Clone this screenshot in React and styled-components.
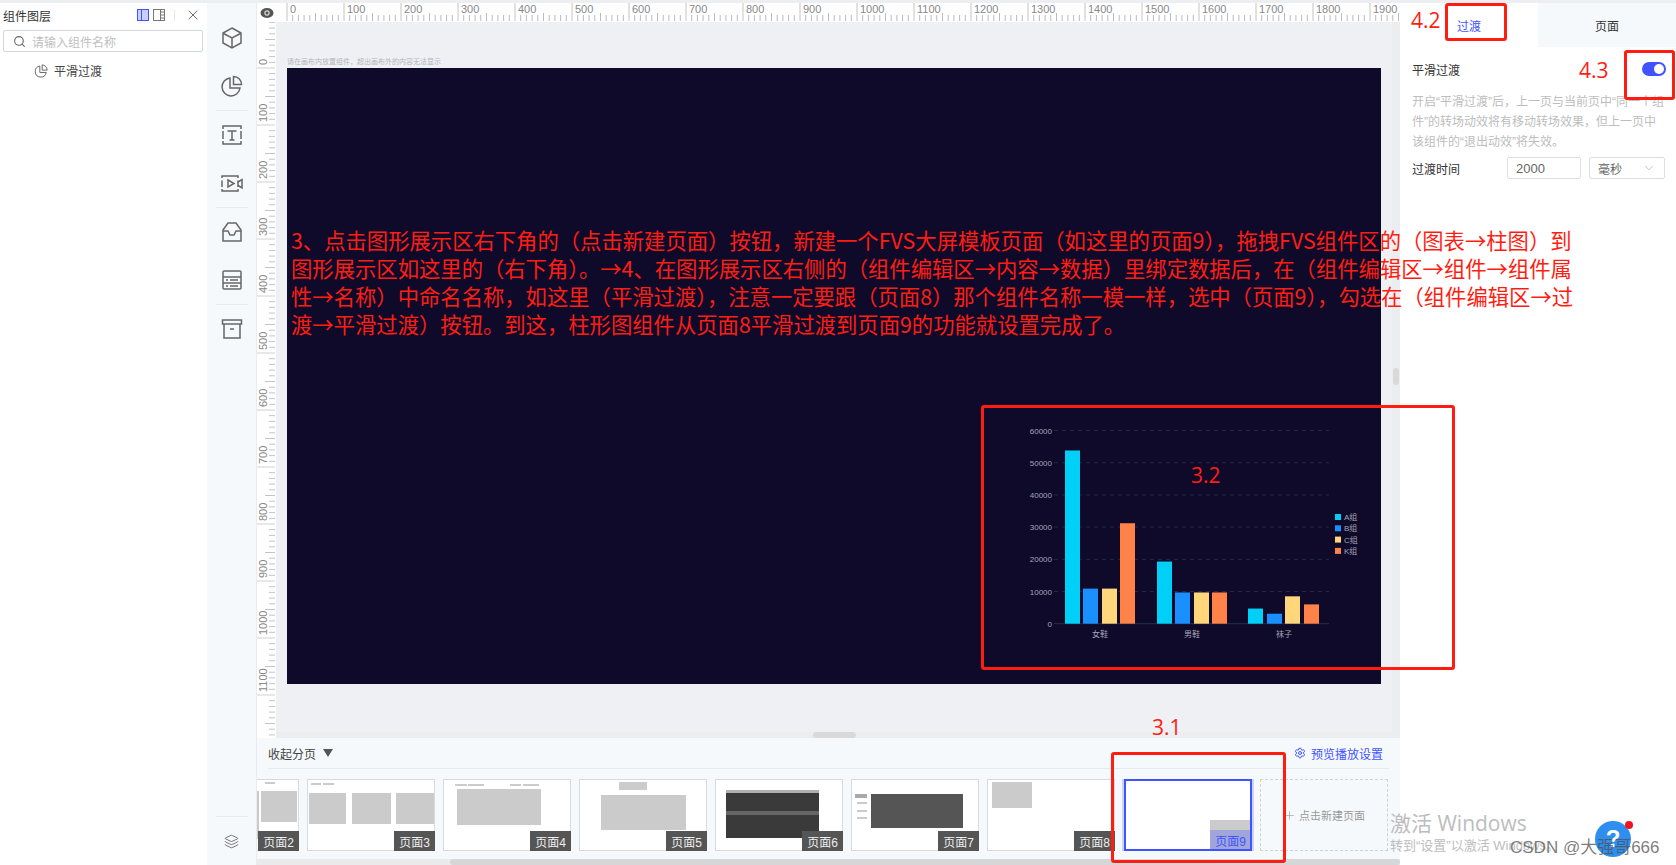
import React from 'react'
import styled, { createGlobalStyle } from 'styled-components'
import { Search, ChevronDown, X, Settings, Layers, Plus } from 'lucide-react'

const GlobalStyle = createGlobalStyle`
  html, body { margin: 0; padding: 0; background: #fff; }
  body { font-family: "Liberation Sans", "Noto Sans CJK SC", sans-serif; font-size: 12px; color: #333; }
  * { box-sizing: border-box; }
`

const MAJOR = 57
const range = (n) => Array.from({ length: n }, (_, i) => i)

const Page = styled.div`
  position: relative;
  height: 865px;
  width: 1676px;
  overflow: hidden;
  border-top: 3px solid #eceef2;
  display: grid;
  grid-template-columns: 207px 50px 1fr 276px;
`

/* left layer panel */
const LayerPanel = styled.aside`
  background: #fff;
  padding: 0 3px;
`
const PanelHead = styled.div`
  height: 27px;
  display: flex;
  align-items: center;
  color: #333;
`
const PanelTitle = styled.span`
  flex: 1;
  margin-top: -3px;
`
const HeadIcons = styled.div`
  display: flex;
  align-items: center;
  gap: 4px;
  margin-right: 3px;
  margin-top: -3px;
`
const HeadSep = styled.i`
  width: 1px;
  height: 11px;
  background: #e6e8ec;
  margin: 0 6px 0 5px;
`
const SearchBox = styled.div`
  height: 22px;
  width: 200px;
  border: 1px solid #d4d7dc;
  border-radius: 2px;
  display: flex;
  align-items: center;
  gap: 6px;
  padding-left: 9px;
  color: #c0c0c0;
  svg { color: #666; }
`
const TreeItem = styled.div`
  display: flex;
  align-items: center;
  gap: 6px;
  margin: 10px 0 0 31px;
  color: #444;
`

/* icon rail */
const Rail = styled.nav`
  background: #f6f9fc;
  display: flex;
  flex-direction: column;
  align-items: center;
  padding-top: 11px;
  border-right: 1px solid #e8ebf0;
`
const RailItem = styled.div`
  height: 48px;
  width: 100%;
  display: flex;
  align-items: center;
  justify-content: center;
  color: #666;
  flex: none;
`
const RailRule = styled.hr`
  width: 32px;
  height: 1px;
  border: 0;
  margin: 0;
  background: #e6e9ee;
  flex: none;
  ${(p) => p.$bottom && 'margin-top: auto;'}
`
const RailFoot = styled.div`
  height: 48px;
  display: flex;
  align-items: center;
  justify-content: center;
  color: #666;
`

/* centre */
const Center = styled.main`
  display: flex;
  flex-direction: column;
  min-width: 0;
  height: 862px;
`
const TopRuler = styled.div`
  height: 19px;
  display: flex;
  flex: none;
`
const Corner = styled.div`
  width: 19px;
  background: #fff;
  display: flex;
  align-items: center;
  justify-content: center;
  flex: none;
`
const Workspace = styled.div`
  flex: 1;
  display: flex;
  min-height: 0;
`
const Stage = styled.div`
  position: relative;
  flex: 1;
  background: #eff0f4;
  padding: 34px 0 0 11px;
`
const Hint = styled.div`
  font-size: 7px;
  line-height: 12px;
  color: #b4b4ba;
`
const Screen = styled.div`
  position: relative;
  width: 1094px;
  height: 616px;
  background: #0f0a2a;
`
const ChartWrap = styled.div`
  position: absolute;
  left: 733px;
  top: 351px;
`
const TrackV = styled.div`
  position: absolute;
  top: 0;
  right: 0;
  bottom: 0;
  width: 8px;
  background: #ecedee;
  &::after {
    content: '';
    position: absolute;
    left: 1px;
    top: 346px;
    width: 6px;
    height: 17px;
    border-radius: 3px;
    background: #d9d9d9;
  }
`
const TrackH = styled.div`
  position: absolute;
  left: 0;
  right: 0;
  bottom: 0;
  height: 6px;
  background: #ecedee;
  &::after {
    content: '';
    position: absolute;
    left: 537px;
    top: 0;
    width: 43px;
    height: 6px;
    border-radius: 3px;
    background: #d9d9d9;
  }
`

/* page strip */
const PageBar = styled.section`
  height: 127px;
  flex: none;
  background: #f6f9fc;
  display: flex;
  flex-direction: column;
`
const PageHead = styled.div`
  height: 31px;
  flex: none;
  margin: 0 11px 0 11px;
  border-bottom: 1px solid #e6eaef;
  display: flex;
  align-items: center;
  justify-content: space-between;
`
const Collapse = styled.span`
  display: flex;
  align-items: center;
  gap: 7px;
  color: #444;
  &::after {
    content: '';
    border-left: 5px solid transparent;
    border-right: 5px solid transparent;
    border-top: 8px solid #555;
  }
`
const PlaySetting = styled.span`
  display: flex;
  align-items: center;
  gap: 5px;
  color: #3f54ff;
  margin-right: 6px;
`
const Strip = styled.div`
  margin-top: 10px;
  height: 72px;
  overflow: hidden;
  flex: none;
`
const Track = styled.div`
  display: flex;
  gap: 8px;
  margin-left: -86px;
`
const Thumb = styled.div`
  position: relative;
  flex: none;
  width: 128px;
  height: 72px;
  background: #fff;
  border: 1px solid #d8dadd;
  ${(p) => p.$active && `
    margin-left: 1px;
    border: 2px solid #3f54ff;
    box-shadow: 0 0 0 2px #ccd3fc;
  `}
`
const ThumbLabel = styled.span`
  position: absolute;
  right: -1px;
  bottom: -1px;
  width: 41px;
  height: 20px;
  display: flex;
  align-items: center;
  justify-content: center;
  background: ${(p) => (p.$active ? 'rgba(63, 84, 255, 0.3)' : '#555')};
  color: ${(p) => (p.$active ? '#3f54ff' : '#eee')};
`
const NewPage = styled.div`
  flex: none;
  width: 128px;
  height: 72px;
  border: 1px dashed #cfd2d6;
  display: flex;
  align-items: center;
  justify-content: center;
  gap: 3px;
  color: #999;
  font-size: 11px;
`
const PageScroll = styled.div`
  margin-top: 8px;
  height: 6px;
  background: #e8eaec;
  padding-left: 193px;
  &::after {
    content: '';
    display: block;
    height: 6px;
    border-radius: 3px;
    background: #d5d6d8;
  }
`

/* right panel */
const SidePanel = styled.aside`
  background: #fff;
`
const Tabs = styled.div`
  height: 44px;
  display: flex;
`
const Tab = styled.div`
  flex: 1;
  display: flex;
  align-items: center;
  justify-content: center;
  background: ${(p) => (p.$active ? '#fff' : '#f6f9fc')};
  color: ${(p) => (p.$active ? '#3f54ff' : '#333')};
`
const SideBody = styled.div`
  padding: 14px 10px 0 12px;
`
const SwitchRow = styled.div`
  display: flex;
  align-items: center;
  justify-content: space-between;
  height: 16px;
`
const Toggle = styled.span`
  position: relative;
  width: 24px;
  height: 14px;
  border-radius: 7px;
  background: #3f54ff;
  &::after {
    content: '';
    position: absolute;
    right: 2px;
    top: 2px;
    width: 10px;
    height: 10px;
    border-radius: 50%;
    background: #fff;
  }
`
const Desc = styled.p`
  margin: 15px 0 0;
  line-height: 20px;
  color: #bdbdbd;
`
const TimeRow = styled.div`
  display: flex;
  align-items: center;
  gap: 8px;
  margin-top: 5px;
`
const TimeLabel = styled.span`
  flex: none;
  width: 87px;
`
const Field = styled.div`
  flex: none;
  height: 22px;
  width: ${(p) => p.$w}px;
  border: 1px solid #dcdee2;
  border-radius: 2px;
  display: flex;
  align-items: center;
  justify-content: space-between;
  padding: 0 8px;
  color: #666;
  font-size: ${(p) => p.$size || 12}px;
  svg { color: #aaa; }
`

/* red notes drawn over the screenshot */
const RedBox = styled.div`
  position: absolute;
  left: ${(p) => p.$x}px;
  top: ${(p) => p.$y}px;
  width: ${(p) => p.$w}px;
  height: ${(p) => p.$h}px;
  border: 3px solid #ff1d12;
  border-radius: 3px;
  pointer-events: none;
`
const RedNote = styled.span`
  position: absolute;
  left: ${(p) => p.$x}px;
  top: ${(p) => p.$y}px;
  color: #ff1d12;
  font-family: "Open Sans", sans-serif;
  font-size: 21px;
  line-height: 28px;
`
const RedText = styled.div`
  position: absolute;
  left: 291px;
  top: 223px;
  color: #ff1d12;
  font-family: "Noto Sans CJK SC", sans-serif;
  font-size: 21.33px;
  line-height: 28px;
  white-space: nowrap;
`

/* windows / csdn watermark */
const Activate = styled.div`
  position: absolute;
  left: 1390px;
  top: 807px;
  color: #bdbdbd;
  font-family: "Open Sans", "Noto Sans CJK SC", sans-serif;
`
const ActivateTitle = styled.div`
  font-size: 21px;
  line-height: 26px;
`
const ActivateSub = styled.div`
  font-size: 13px;
  line-height: 20px;
  font-family: "Liberation Sans", "Noto Sans CJK SC", sans-serif;
`
const HelpBall = styled.div`
  position: absolute;
  left: 1595px;
  top: 818px;
  width: 36px;
  height: 36px;
  border-radius: 50%;
  background: #2f8ff0;
  color: #fff;
  font-size: 24px;
  font-weight: 700;
  display: flex;
  align-items: center;
  justify-content: center;
  &::after {
    content: '';
    position: absolute;
    right: -2px;
    top: 0;
    width: 8px;
    height: 8px;
    border-radius: 50%;
    background: #f0141e;
  }
`
const Csdn = styled.div`
  position: absolute;
  left: 1510px;
  top: 834px;
  font-size: 17px;
  line-height: 22px;
  color: rgba(80, 80, 80, 0.75);
  font-family: "Liberation Sans", "Noto Sans CJK SC", sans-serif;
  white-space: nowrap;
`

const HorizontalRuler = () => (
  <svg width="1124" height="19" style={{ display: 'block', background: '#fff' }}>
    {range(200).map((i) => {
      const x = 11 + i * 5.7
      return <line key={i} x1={x} x2={x} y1={i % 10 === 0 ? 0 : i % 5 === 0 ? 10 : 12} y2="18" stroke={i % 10 === 0 ? '#c4c4c4' : '#bbb'} />
    })}
    {range(20).map((i) => (
      <text key={i} x={14 + i * MAJOR} y="10" fontSize="11" fill="#888" fontFamily="Liberation Sans">{i * 100}</text>
    ))}
  </svg>
)

const VerticalRuler = () => (
  <svg width="19" height="716" style={{ display: 'block', flex: 'none', background: '#fff' }}>
    {range(130).map((i) => {
      const y = 46 - 5.7 * 8 + i * 5.7
      const major = (i - 8) % 10 === 0
      return <line key={i} x1={major ? 0 : i % 5 === 3 ? 8 : 12} x2="18" y1={y} y2={y} stroke={major ? '#d0d0d0' : '#c4c4c4'} />
    })}
    {range(12).map((i) => {
      const y = 43 + i * MAJOR
      return <text key={i} x="0" y="0" transform={`translate(10 ${y}) rotate(-90)`} fontSize="11" fill="#888" fontFamily="Liberation Sans">{i * 100}</text>
    })}
  </svg>
)

const RailIcon = ({ children }) => (
  <svg width="24" height="24" viewBox="0 0 24 24" fill="none" stroke="currentColor" strokeWidth="1.5">{children}</svg>
)

const BAR_COLORS = ['#00d0f8', '#1a90ff', '#ffd77a', '#ff8248']
const GROUPS = [
  { name: '女鞋', x: [45, 63, 82, 100], v: [53800, 10900, 10900, 31200] },
  { name: '男鞋', x: [137, 155, 174, 192], v: [19300, 9700, 9700, 9700] },
  { name: '袜子', x: [228, 247, 265, 284], v: [4700, 3100, 8500, 6000] },
]
const ZERO_Y = 204.7
const UNIT = 32.2 / 10000

const BarChart = () => (
  <svg width="340" height="230" fontFamily="Liberation Sans, Noto Sans CJK SC" fontSize="8" fill="#a5a5b5">
    {[1, 2, 3, 4, 5, 6].map((k) => (
      <line key={k} x1="34" x2="309" y1={ZERO_Y - k * 32.2} y2={ZERO_Y - k * 32.2} stroke="#1c2b44" strokeDasharray="4 4" />
    ))}
    <line x1="34" x2="309" y1={ZERO_Y} y2={ZERO_Y} stroke="#22324c" />
    {[0, 1, 2, 3, 4, 5, 6].map((k) => (
      <text key={k} x="32" y={ZERO_Y - k * 32.2 + 3} textAnchor="end">{k * 10000}</text>
    ))}
    {GROUPS.map((g) => (
      <g key={g.name}>
        {g.v.map((v, i) => (
          <rect key={i} x={g.x[i]} y={ZERO_Y - v * UNIT} width="15" height={v * UNIT} fill={BAR_COLORS[i]} />
        ))}
        <text x={g.x[1] + 17} y="218" textAnchor="middle">{g.name}</text>
      </g>
    ))}
    {['A组', 'B组', 'C组', 'K组'].map((t, i) => (
      <g key={t}>
        <rect x="315" y={95 + i * 11.3} width="6" height="6" fill={BAR_COLORS[i]} />
        <text x="324" y={101 + i * 11.3}>{t}</text>
      </g>
    ))}
  </svg>
)

const GREY = '#cbcbcb'
const PAGES = [
  { n: 2, rects: [[85, 11, 2, 48, GREY], [89, 11, 36, 31, GREY], [93, 2, 10, 2, GREY]] },
  { n: 3, rects: [[1, 13, 37, 31, GREY], [44, 13, 39, 31, GREY], [88, 13, 38, 31, GREY], [3, 3, 10, 2, GREY], [15, 3, 11, 2, GREY]] },
  { n: 4, rects: [[13, 9, 84, 36, GREY], [11, 4, 12, 2, GREY], [24, 4, 16, 2, GREY], [66, 4, 11, 2, GREY], [79, 4, 16, 2, GREY]] },
  { n: 5, rects: [[39, 2, 28, 8, GREY], [21, 15, 85, 35, GREY]] },
  { n: 6, rects: [[10, 10, 93, 48, '#3a3a3a'], [10, 10, 93, 3, '#b0b0b0'], [10, 31, 93, 4, '#666']] },
  { n: 7, rects: [[19, 14, 92, 34, '#555'], [3, 14, 12, 4, '#aaa'], [5, 22, 10, 2, GREY], [5, 30, 10, 2, GREY], [5, 37, 10, 2, GREY]] },
  { n: 8, rects: [[4, 2, 40, 26, GREY]] },
  { n: 9, active: true, rects: [[84, 39, 40, 29, GREY]] },
]

const App = () => {
  return (
    <Page>
      <GlobalStyle />
      <LayerPanel>
        <PanelHead>
          <PanelTitle>组件图层</PanelTitle>
          <HeadIcons>
            <svg width="12" height="12" viewBox="0 0 12 12"><rect x="0.5" y="0.5" width="11" height="11" fill="#c9d0ff" stroke="#3f54ff" /><path d="M4.5 1V11" stroke="#3f54ff" /></svg>
            <svg width="12" height="12" viewBox="0 0 12 12" fill="none" stroke="#777"><rect x="0.5" y="0.5" width="11" height="11" /><path d="M7.5 1V11" /><path d="M8 3H11M8 6H11M8 9H11" /></svg>
            <HeadSep />
            <X size={16} color="#555" strokeWidth={1.3} />
          </HeadIcons>
        </PanelHead>
        <SearchBox>
          <Search size={13} />
          <span>请输入组件名称</span>
        </SearchBox>
        <TreeItem>
          <svg width="14" height="14" viewBox="0 0 24 24" fill="none" stroke="#555" strokeWidth="1.5"><path d="M10 3.5A9.5 9.5 0 1 0 21 14.5H10Z" /><path d="M14 1.5A9 9 0 0 1 22.5 10.5H14Z" /></svg>
          <span>平滑过渡</span>
        </TreeItem>
      </LayerPanel>

      <Rail>
        <RailItem><RailIcon><path d="M12 2L21 7V17L12 22L3 17V7Z" /><path d="M3.5 7.5L12 12L20.5 7.5M12 12V22" /></RailIcon></RailItem>
        <RailItem><RailIcon><path d="M10 4A9 9 0 1 0 20 14H10Z" /><path d="M13.5 2.5A8 8 0 0 1 21.5 10.5H13.5Z" /></RailIcon></RailItem>
        <RailRule />
        <RailItem><RailIcon><path d="M3 6V3H21V6M3 18V21H21V18M3 8V16M21 8V16" /><path d="M7.5 8H16.5M12 8V17M9.5 17H14.5" /></RailIcon></RailItem>
        <RailItem><RailIcon><path d="M2 7V5H18V7M2 9.5V16M18 9.5V16M2 18V20H18V18" /><path d="M8 9L14 12.5L8 16Z" /><path d="M18 11L22 8.5V17L18 14.5" /></RailIcon></RailItem>
        <RailRule />
        <RailItem><RailIcon><path d="M3 10L8 3H16L21 10V21H3Z" /><path d="M3 11H8L10 15H14L16 11H21" /></RailIcon></RailItem>
        <RailItem><RailIcon><rect x="3" y="3" width="18" height="18" rx="1" /><path d="M3 9H21M3 15H21M6 12H8M10 12H18M6 18H8M10 18H18" /></RailIcon></RailItem>
        <RailRule />
        <RailItem><RailIcon><rect x="2.5" y="3" width="19" height="4" /><path d="M4 7V21H20V7M10 12H14" /></RailIcon></RailItem>
        <RailRule $bottom />
        <RailFoot><Layers size={15} strokeWidth={1.4} /></RailFoot>
      </Rail>

      <Center>
        <TopRuler>
          <Corner>
            <svg width="14" height="12" viewBox="0 0 14 12"><ellipse cx="7" cy="6" rx="6.5" ry="5" fill="#555" /><rect x="5" y="4" width="4" height="4" rx="1" fill="none" stroke="#fff" /></svg>
          </Corner>
          <HorizontalRuler />
        </TopRuler>
        <Workspace>
          <VerticalRuler />
          <Stage>
            <Hint>请在画布内放置组件，超出画布外的内容无法显示</Hint>
            <Screen>
              <ChartWrap><BarChart /></ChartWrap>
            </Screen>
            <TrackV />
            <TrackH />
          </Stage>
        </Workspace>
        <PageBar>
          <PageHead>
            <Collapse>收起分页</Collapse>
            <PlaySetting><Settings size={12} />预览播放设置</PlaySetting>
          </PageHead>
          <Strip>
            <Track>
              {PAGES.map((p) => (
                <Thumb key={p.n} $active={p.active}>
                  <svg width="124" height="68" viewBox="0 0 124 68" style={{ display: 'block', overflow: 'visible' }}>
                    {p.rects.map((r, i) => (
                      <rect key={i} x={r[0]} y={r[1]} width={r[2]} height={r[3]} fill={r[4]} />
                    ))}
                  </svg>
                  <ThumbLabel $active={p.active}>页面{p.n}</ThumbLabel>
                </Thumb>
              ))}
              <NewPage><Plus size={13} strokeWidth={1.2} />点击新建页面</NewPage>
            </Track>
          </Strip>
          <PageScroll />
        </PageBar>
      </Center>

      <SidePanel>
        <Tabs>
          <Tab $active>过渡</Tab>
          <Tab>页面</Tab>
        </Tabs>
        <SideBody>
          <SwitchRow>
            <span>平滑过渡</span>
            <Toggle />
          </SwitchRow>
          <Desc>开启“平滑过渡”后，上一页与当前页中“同一个组件”的转场动效将有移动转场效果，但上一页中该组件的“退出动效”将失效。</Desc>
          <TimeRow>
            <TimeLabel>过渡时间</TimeLabel>
            <Field $w={74} $size={13}>2000</Field>
            <Field $w={76}>毫秒<ChevronDown size={14} strokeWidth={1.2} /></Field>
          </TimeRow>
        </SideBody>
      </SidePanel>

      <RedText>
        <div>3、点击图形展示区右下角的（点击新建页面）按钮，新建一个FVS大屏模板页面（如这里的页面9），拖拽FVS组件区的（图表→柱图）到</div>
        <div>图形展示区如这里的（右下角）。→4、在图形展示区右侧的（组件编辑区→内容→数据）里绑定数据后，在（组件编辑区→组件→组件属</div>
        <div>性→名称）中命名名称，如这里（平滑过渡），注意一定要跟（页面8）那个组件名称一模一样，选中（页面9），勾选在（组件编辑区→过</div>
        <div>渡→平滑过渡）按钮。到这，柱形图组件从页面8平滑过渡到页面9的功能就设置完成了。</div>
      </RedText>
      <RedBox $x={981} $y={402} $w={474} $h={265} />
      <RedBox $x={1111} $y={749} $w={175} $h={111} />
      <RedBox $x={1445} $y={0} $w={62} $h={38} />
      <RedBox $x={1624} $y={47} $w={51} $h={50} />
      <RedNote $x={1191} $y={458}>3.2</RedNote>
      <RedNote $x={1152} $y={710}>3.1</RedNote>
      <RedNote $x={1411} $y={3}>4.2</RedNote>
      <RedNote $x={1579} $y={53}>4.3</RedNote>

      <Activate>
        <ActivateTitle>激活 Windows</ActivateTitle>
        <ActivateSub>转到“设置”以激活 Windows。</ActivateSub>
      </Activate>
      <HelpBall>?</HelpBall>
      <Csdn>CSDN @大强哥666</Csdn>
    </Page>
  )
}

export default App
